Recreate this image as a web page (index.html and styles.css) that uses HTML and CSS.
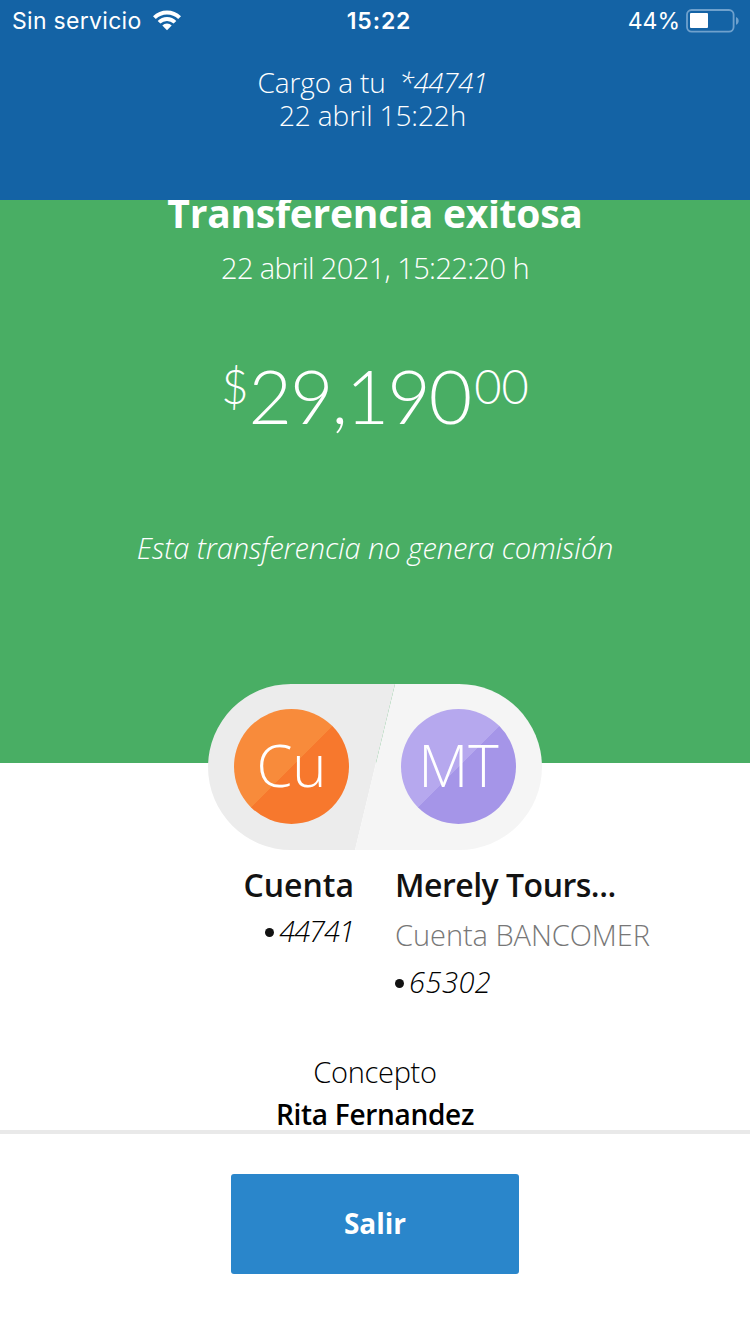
FILE: index.html
```html
<!DOCTYPE html>
<html lang="es">
<head>
  <meta charset="UTF-8" />
  <meta name="viewport" content="width=device-width, initial-scale=1.0"/>
  <title>Transferencia exitosa</title>
  <link rel="stylesheet" href="styles.css">
</head>
<body>
  <header>
    <div class="status-bar">
      <div class="carrier">
        <span class="carrier-name">Sin servicio</span>
        <svg class="wifi" width="30" height="22" viewBox="0 0 30 22">
          <path d="M1 7.2A20 20 0 0 1 29 7.2L26.2 10A16 16 0 0 0 3.8 10Z" fill="#fff"/>
          <path d="M5.7 11.9A13.3 13.3 0 0 1 24.3 11.9L21.6 14.6A9.5 9.5 0 0 0 8.4 14.6Z" fill="#fff"/>
          <path d="M10.3 16.5A6.8 6.8 0 0 1 19.7 16.5L15 21.2Z" fill="#fff"/>
        </svg>
      </div>
      <span class="clock">15:22</span>
      <div class="battery">
        <span class="percent">44%</span>
        <svg width="54" height="24" viewBox="0 0 54 24">
          <rect x="1" y="1" width="46.6" height="21.6" rx="4.6" fill="none" stroke="#6fa1cd" stroke-width="1.8"/>
          <rect x="4" y="4" width="18" height="15" rx="1" fill="#fff"/>
          <path d="M50 8c3.6 1.2 3.6 6.6 0 7.800z" fill="#6fa1cd"/>
        </svg>
      </div>
    </div>
    <p class="charge"><span class="charge-label">Cargo a tu</span> <i class="charge-account">*44741</i></p>
    <p class="charge charge-date">22 abril 15:22h</p>
  </header>

  <section class="hero">
    <h1>Transferencia exitosa</h1>
    <p class="date">22 abril 2021, 15:22:20 h</p>
    <p class="amount"><span class="currency">$</span><span class="integer">29,190</span><span class="cents">00</span></p>
    <p class="fee">Esta transferencia no genera comisión</p>
  </section>

  <div class="accounts">
    <svg class="pill" width="334" height="166" viewBox="0 0 334 166">
      <path d="M83 0H187L147 166H83A83 83 0 0 1 83 0Z" fill="#ececec"/>
      <path d="M187 0H251A83 83 0 0 1 251 166H147Z" fill="#f5f5f5"/>
    </svg>
    <div class="avatar avatar-from"><span>Cu</span></div>
    <div class="avatar avatar-to"><span>MT</span></div>
  </div>

  <div class="details">
    <div class="from">
      <h2>Cuenta</h2>
      <p class="number"><span class="dot"></span><i>44741</i></p>
    </div>
    <div class="to">
      <h2>Merely Tours...</h2>
      <p class="bank">Cuenta BANCOMER</p>
      <p class="number"><span class="dot"></span><i>65302</i></p>
    </div>
  </div>

  <section class="concept">
    <p class="label">Concepto</p>
    <p class="value">Rita Fernandez</p>
  </section>

  <footer>
    <button class="exit">Salir</button>
  </footer>
</body>
</html>
```
FILE: styles.css
```css
* { box-sizing: border-box; margin: 0; padding: 0; }

body {
  height: 1334px;
  overflow: hidden;
  display: flex;
  flex-direction: column;
  background: #fff;
  font-family: "Open Sans", sans-serif;
  font-size: 29px;
  font-weight: 330;
}

header {
  position: relative;
  z-index: 1;
  flex: none;
  height: 200px;
  background: #1463a5;
  color: #fff;
  text-align: center;
}

.status-bar {
  display: grid;
  grid-template-columns: 1fr auto 1fr;
  align-items: center;
  height: 41px;
  margin-bottom: 25px;
  padding: 0 10px 0 12px;
  font-family: Inter, sans-serif;
  font-size: 23px;
  font-weight: 400;
}

.carrier {
  display: flex;
  align-items: center;
  gap: 10px;
}

.carrier-name { letter-spacing: 0.3px; }

.wifi { margin-bottom: 2px; }

.clock {
  padding-left: 6px;
  font-weight: 600;
  letter-spacing: 0.9px;
}

.battery {
  display: flex;
  justify-content: flex-end;
  align-items: center;
  gap: 6px;
}

.charge {
  padding-right: 5px;
  font-size: 28px;
  line-height: 33px;
  letter-spacing: -0.1px;
  white-space: pre;
}

.charge-account {
  margin-left: 6px;
  letter-spacing: -0.6px;
}

.hero {
  flex: none;
  height: 563px;
  background: #49ae64;
  color: #fff;
  text-align: center;
}

.hero h1 {
  margin-top: -12px;
  font-size: 39px;
  font-weight: 700;
  line-height: 50px;
  letter-spacing: -0.25px;
}

.date {
  margin-top: 10px;
  line-height: 40px;
  letter-spacing: -0.6px;
}

.amount {
  display: flex;
  justify-content: center;
  align-items: flex-start;
  margin-top: 62px;
  font-family: Lato, sans-serif;
  font-weight: 300;
  line-height: 90px;
}

.integer {
  font-size: 75px;
  letter-spacing: -2px;
}

.currency, .cents {
  font-size: 47px;
  line-height: 73px;
}

.cents { margin-left: 4px; }

.fee {
  margin-top: 88px;
  font-style: italic;
  line-height: 40px;
  letter-spacing: -0.1px;
}

.accounts {
  position: relative;
  flex: none;
  display: flex;
  justify-content: space-between;
  align-items: flex-start;
  width: 334px;
  height: 166px;
  margin: -79px auto 0;
  padding: 25px 26px 0;
}

.pill {
  position: absolute;
  top: 0;
  left: 0;
}

.avatar {
  position: relative;
  width: 115px;
  height: 115px;
  border-radius: 50%;
  color: #fff;
  font-size: 58px;
  line-height: 112px;
  text-align: center;
}

.avatar-from { background: linear-gradient(135deg, #f88b3b 50%, #f7782d 50%); }
.avatar-to { background: linear-gradient(135deg, #b6a8ee 50%, #a595e8 50%); }

.details {
  flex: none;
  display: grid;
  grid-template-columns: 354px 1fr;
  column-gap: 41px;
  height: 196px;
  padding-top: 15px;
  color: #121212;
}

.from { text-align: right; }

.details h2 {
  font-size: 32px;
  font-weight: 600;
  line-height: 40px;
}

.to h2 { letter-spacing: -0.5px; }

.number {
  display: flex;
  align-items: center;
  gap: 5px;
  color: #000;
  line-height: 40px;
}

.from .number {
  justify-content: flex-end;
  margin-top: 6px;
  letter-spacing: -1px;
}

.dot {
  width: 9px;
  height: 9px;
  margin-top: 3px;
  border-radius: 50%;
  background: #121212;
}

.bank {
  margin-top: 10px;
  color: #777;
  line-height: 40px;
  letter-spacing: -0.05px;
}

.to .number {
  margin-top: 7px;
  letter-spacing: 0.5px;
}

.concept {
  flex: none;
  height: 83px;
  padding-top: 5px;
  color: #000;
  text-align: center;
  line-height: 42px;
}

.label { letter-spacing: -0.3px; }

.value {
  font-size: 28px;
  font-weight: 600;
  letter-spacing: -0.3px;
}

footer {
  flex: 1;
  margin-top: 1px;
  border-top: 4px solid #e9e9e9;
  background: #fff;
  text-align: center;
}

.exit {
  width: 288px;
  height: 100px;
  margin-top: 40px;
  padding-bottom: 2px;
  border: none;
  border-radius: 3px;
  background: #2a86cb;
  color: #fff;
  font-family: inherit;
  font-size: 28px;
  font-weight: 700;
}
```
